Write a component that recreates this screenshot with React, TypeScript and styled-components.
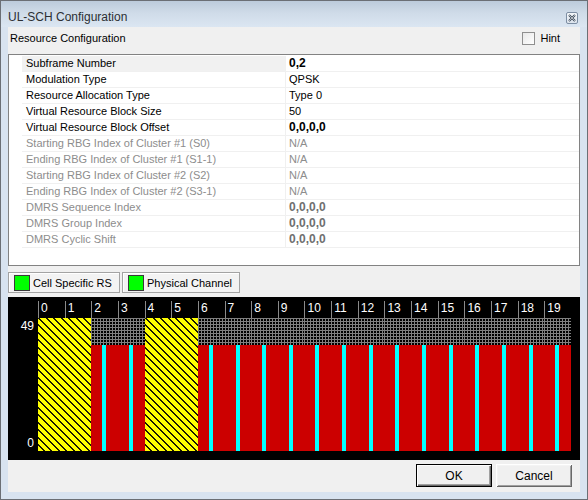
import React from "react";
import styled, { createGlobalStyle } from "styled-components";

const Global = createGlobalStyle`
  html, body { margin: 0; padding: 0; background: #ffffff; }
  body { font-family: "Liberation Sans", Arial, sans-serif; }
  * { box-sizing: border-box; }
`;

const Window = styled.div`
  width: 588px;
  height: 500px;
  border: 1px solid #6b6f75;
  background: #d8e3f0;
  display: flex;
  flex-direction: column;
  padding: 0 7px 7px 7px;
`;

const TitleBar = styled.div`
  height: 26px;
  margin: 0 -7px;
  padding: 0 9px 0 7px;
  display: flex;
  align-items: center;
  justify-content: space-between;
  background: linear-gradient(to bottom, #bccbdb 0%, #cfdbe8 45%, #dbe6f2 100%);
`;

const Title = styled.span`
  font-family: "Liberation Sans", Arial, sans-serif;
  font-size: 12px;
  color: #2c2f33;
  padding-top: 6px;
`;

const CloseBox = styled.div`
  width: 12px;
  height: 12px;
  margin-top: 8px;
  border: 1px solid #7d8ea3;
  border-radius: 2px;
  background: linear-gradient(#f4f7fa, #dbe3ec);
  display: flex;
  align-items: center;
  justify-content: center;
`;

const Client = styled.div`
  flex: 1;
  background: #f0f0f0;
  display: flex;
  flex-direction: column;
`;

const Header = styled.div`
  height: 27px;
  padding: 4px 20px 0 2px;
  display: flex;
  align-items: flex-start;
  justify-content: space-between;
  font-size: 11px;
  line-height: 14px;
  color: #000;
`;

const HintLabel = styled.label`
  display: flex;
  align-items: center;
  gap: 5px;
`;

const CheckBox = styled.span`
  width: 13px;
  height: 13px;
  border: 1px solid #8f8f8f;
  background: linear-gradient(135deg, #e8e8e8, #ffffff);
  display: inline-block;
`;

const Grid = styled.div`
  height: 212px;
  border: 1px solid #828282;
  background: #ffffff;
  padding-top: 1px;
  padding-left: 13px;
`;

const Row = styled.div`
  display: grid;
  grid-template-columns: 263px 1fr;
  height: 16px;
  border-bottom: 1px solid #f0f0f0;
  font-size: 11px;
  line-height: 15px;
`;

const NameCell = styled.div<{ $dim?: boolean; $sel?: boolean }>`
  padding-left: 4px;
  color: ${(p) => (p.$dim ? "#8d8d8d" : "#000")};
  background: ${(p) => (p.$sel ? "#f1f1f1" : "#fff")};
  white-space: nowrap;
`;

const ValueCell = styled.div<{ $dim?: boolean; $bold?: boolean }>`
  padding-left: 3px;
  border-left: 1px solid #f0f0f0;
  color: ${(p) => (p.$dim ? (p.$bold ? "#6f6f6f" : "#8d8d8d") : "#000")};
  font-weight: ${(p) => (p.$bold ? 700 : 400)};
  font-size: ${(p) => (p.$bold ? "12px" : "11px")};
  white-space: nowrap;
`;

const LegendBar = styled.div`
  margin-top: 6px;
  height: 21px;
  display: flex;
  gap: 2px;
`;

const LegendItem = styled.div<{ $w: number }>`
  width: ${(p) => p.$w}px;
  height: 21px;
  border: 1px solid #a3a3a3;
  box-shadow: inset 1px 1px #ffffff;
  background: #f3f3f3;
  display: flex;
  align-items: center;
  gap: 3px;
  padding-left: 5px;
  font-size: 11px;
  color: #000;
`;

const Swatch = styled.span`
  width: 16px;
  height: 16px;
  background: #00ff00;
  border: 1px solid #3a3a3a;
`;

const Chart = styled.div`
  margin-top: 4px;
  height: 163px;
  background: #000;
  display: grid;
  grid-template-columns: 30px 533px 9px;
  grid-template-rows: 21px 133px 9px;
`;

const ColHeads = styled.div`
  grid-column: 2;
  grid-row: 1;
  display: grid;
  grid-template-columns: repeat(20, 1fr);
`;

const ColHead = styled.div`
  margin-top: 4px;
  border-left: 1px solid #8a8a8a;
  padding-left: 2px;
  color: #fff;
  font-size: 12px;
  line-height: 14px;
`;

const Axis = styled.div`
  grid-column: 1;
  grid-row: 2;
  display: flex;
  flex-direction: column;
  justify-content: space-between;
  align-items: flex-end;
  padding: 1px 4px 1px 0;
  color: #fff;
  font-size: 12px;
  line-height: 14px;
`;

const Plot = styled.div`
  grid-column: 2;
  grid-row: 2;
  display: grid;
  grid-template-columns: repeat(20, 1fr);
`;

const Hatch = styled.div`
  grid-column: span 2;
  background: repeating-linear-gradient(
    45deg,
    #ffff00 0px,
    #ffff00 3.8px,
    #1a1a00 3.8px,
    #1a1a00 5.3px
  );
`;

const Channel = styled.div`
  display: flex;
  flex-direction: column;
`;

const Mesh = styled.div`
  height: 27px;
  background-color: #000;
  background-image: repeating-linear-gradient(to right, #808080 0 1px, transparent 1px 3px),
    repeating-linear-gradient(to bottom, #808080 0 1px, transparent 1px 3px);
`;

const Red = styled.div`
  flex: 1;
  background: linear-gradient(
    to right,
    #cc0000 0,
    #cc0000 11px,
    #00ffff 11px,
    #00ffff 15px,
    #cc0000 15px
  );
`;

const ButtonRow = styled.div`
  flex: 1;
  display: flex;
  justify-content: flex-end;
  align-items: flex-start;
  gap: 4px;
  padding: 4px 8px 0 0;
`;

const Button = styled.button<{ $default?: boolean }>`
  width: 76px;
  height: 23px;
  font-family: "Liberation Sans", Arial, sans-serif;
  font-size: 12px;
  color: #000;
  background: #f0f0f0;
  padding: 0;
  border: ${(p) => (p.$default ? "1px solid #000" : "none")};
  box-shadow: ${(p) =>
    p.$default
      ? "inset 1px 1px #ffffff, inset -1px -1px #696969, inset -2px -2px #a0a0a0"
      : "inset 1px 1px #ffffff, inset -1px -1px #696969, inset 2px 2px #f4f4f4, inset -2px -2px #a0a0a0"};
`;

type Prop = { name: string; value: string; dim?: boolean; bold?: boolean };

const props: Prop[] = [
  { name: "Subframe Number", value: "0,2", bold: true },
  { name: "Modulation Type", value: "QPSK" },
  { name: "Resource Allocation Type", value: "Type 0" },
  { name: "Virtual Resource Block Size", value: "50" },
  { name: "Virtual Resource Block Offset", value: "0,0,0,0", bold: true },
  { name: "Starting RBG Index of Cluster #1 (S0)", value: "N/A", dim: true },
  { name: "Ending RBG Index of Cluster #1 (S1-1)", value: "N/A", dim: true },
  { name: "Starting RBG Index of Cluster #2 (S2)", value: "N/A", dim: true },
  { name: "Ending RBG Index of Cluster #2 (S3-1)", value: "N/A", dim: true },
  { name: "DMRS Sequence Index", value: "0,0,0,0", dim: true, bold: true },
  { name: "DMRS Group Index", value: "0,0,0,0", dim: true, bold: true },
  { name: "DMRS Cyclic Shift", value: "0,0,0,0", dim: true, bold: true },
];

export default function App() {
  const cols = Array.from({ length: 20 }, (_, i) => i);
  const plotItems: React.ReactNode[] = [];
  let i = 0;
  while (i < 20) {
    if (i === 0 || i === 4) {
      plotItems.push(<Hatch key={i} />);
      i += 2;
    } else {
      plotItems.push(
        <Channel key={i}>
          <Mesh />
          <Red />
        </Channel>
      );
      i += 1;
    }
  }
  return (
    <>
      <Global />
      <Window>
        <TitleBar>
          <Title>UL-SCH Configuration</Title>
          <CloseBox>
            <svg width="8" height="8" viewBox="0 0 8 8">
              <path d="M1 1 L7 7 M7 1 L1 7" stroke="#3d4a5a" strokeWidth="2" />
              <path d="M1 1 L7 7 M7 1 L1 7" stroke="#ffffff" strokeWidth="0.6" />
            </svg>
          </CloseBox>
        </TitleBar>
        <Client>
          <Header>
            <span>Resource Configuration</span>
            <HintLabel>
              <CheckBox />
              <span>Hint</span>
            </HintLabel>
          </Header>
          <Grid>
            {props.map((p, idx) => (
              <Row key={p.name}>
                <NameCell $dim={p.dim} $sel={idx === 0}>
                  {p.name}
                </NameCell>
                <ValueCell $dim={p.dim} $bold={p.bold}>
                  {p.value}
                </ValueCell>
              </Row>
            ))}
          </Grid>
          <LegendBar>
            <LegendItem $w={112}>
              <Swatch />
              <span>Cell Specific RS</span>
            </LegendItem>
            <LegendItem $w={118}>
              <Swatch />
              <span>Physical Channel</span>
            </LegendItem>
          </LegendBar>
          <Chart>
            <ColHeads>
              {cols.map((c) => (
                <ColHead key={c}>{c}</ColHead>
              ))}
            </ColHeads>
            <Axis>
              <span>49</span>
              <span>0</span>
            </Axis>
            <Plot>{plotItems}</Plot>
          </Chart>
          <ButtonRow>
            <Button $default>OK</Button>
            <Button>Cancel</Button>
          </ButtonRow>
        </Client>
      </Window>
    </>
  );
}
